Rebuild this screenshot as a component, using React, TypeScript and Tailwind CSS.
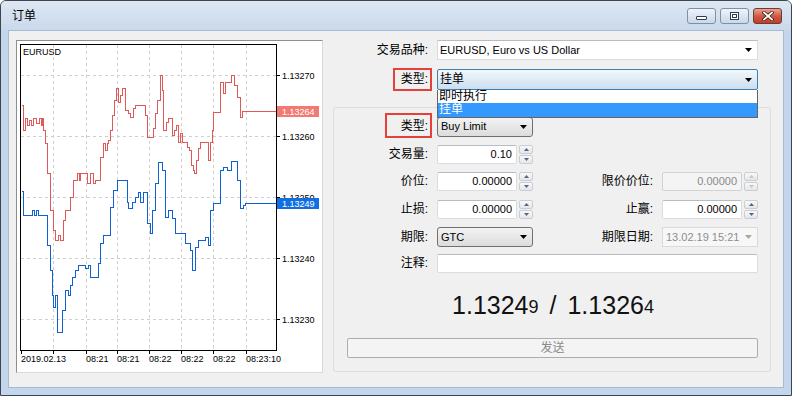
import React from 'react'

const FONT = "font-['Liberation_Sans','Noto_Sans_CJK_SC',sans-serif]"

// ask (red) and bid (blue) ticks, page coordinates
const ASK = [
  [21, 105], [23, 130], [25, 118], [27, 125], [29, 120], [31, 125], [33, 118], [36, 123], [39, 118], [41, 125],
  [42, 118], [43, 130], [45, 143], [47, 173], [50, 210], [53, 230], [55, 240], [58, 235], [60, 240], [62, 240],
  [63, 220], [65, 210], [70, 197], [73, 180], [77, 173], [79, 180], [80, 173], [84, 173], [87, 183], [90, 173],
  [93, 183], [95, 180], [97, 180], [100, 157], [103, 143], [105, 150], [107, 143], [108, 140], [110, 130],
  [112, 115], [114, 100], [116, 88], [118, 102], [120, 95], [122, 88], [125, 110], [128, 113], [130, 117],
  [133, 108], [135, 105], [143, 105], [145, 115], [147, 137], [151, 137], [153, 128], [155, 113], [157, 100],
  [160, 75], [162, 90], [163, 130], [166, 122], [168, 118], [170, 118], [172, 135], [174, 130], [176, 125],
  [178, 142], [180, 133], [182, 142], [185, 142], [187, 147], [189, 150], [191, 165], [193, 170], [194, 173],
  [196, 160], [198, 148], [200, 142], [207, 142], [208, 160], [210, 142], [212, 130], [213, 112], [217, 112],
  [220, 82], [223, 93], [225, 82], [228, 82], [231, 75], [234, 85], [237, 97], [240, 117], [242, 111], [276, 111],
]

const BID = [
  [21, 191], [23, 215], [30, 215], [32, 210], [34, 215], [36, 210], [38, 215], [45, 215], [47, 245], [50, 270],
  [52, 295], [53, 307], [55, 295], [57, 332], [60, 332], [62, 310], [65, 290], [68, 295], [70, 285], [72, 277],
  [75, 270], [78, 265], [82, 265], [85, 268], [88, 265], [90, 277], [95, 277], [98, 263], [100, 243], [103, 235],
  [108, 235], [110, 207], [113, 190], [117, 180], [124, 180], [127, 202], [128, 208], [132, 202], [135, 197],
  [138, 192], [140, 202], [143, 192], [147, 223], [150, 233], [152, 210], [155, 183], [158, 162], [162, 170],
  [165, 217], [168, 210], [172, 218], [175, 233], [180, 233], [185, 243], [190, 250], [192, 270], [195, 247],
  [198, 240], [205, 237], [208, 245], [210, 210], [213, 203], [217, 203], [220, 170], [223, 167], [227, 170],
  [231, 161], [237, 180], [240, 208], [243, 205], [245, 203], [276, 203],
]

const step = (pts: number[][]) =>
  pts.map(([x, y], i) => (i === 0 ? `M${x + 0.5} ${y + 0.5}` : `H${x + 0.5}V${y + 0.5}`)).join('')

const PRICES = [
  { y: 75, label: '1.13270' },
  { y: 136, label: '1.13260' },
  { y: 197, label: '1.13250' },
  { y: 258, label: '1.13240' },
  { y: 319, label: '1.13230' },
]
const TIMES = [
  { x: 53, label: '' },
  { x: 86, label: '08:21' },
  { x: 117, label: '08:21' },
  { x: 149, label: '08:22' },
  { x: 181, label: '08:22' },
  { x: 213, label: '08:22' },
  { x: 246, label: '08:23:10' },
]

function Chart() {
  return (
    <div className="h-[333px] w-[307px] border border-t-[#8f8f8f] border-l-[#8f8f8f] border-r-[#d9d9d9] border-b-[#d9d9d9] bg-white">
      <svg width="305" height="331" viewBox="17 41 305 331" className="block">
        {PRICES.map((p) => (
          <line key={p.y} x1="21" x2="276" y1={p.y + 0.5} y2={p.y + 0.5} stroke="#cfcfcf" strokeDasharray="3 3" />
        ))}
        {TIMES.map((t) => (
          <line key={t.x} x1={t.x + 0.5} x2={t.x + 0.5} y1="45" y2="350" stroke="#cfcfcf" strokeDasharray="3 3" />
        ))}
        <path d={step(ASK)} fill="none" stroke="#e05858" strokeWidth="1" shapeRendering="crispEdges" />
        <path d={step(BID)} fill="none" stroke="#0f60d4" strokeWidth="1" shapeRendering="crispEdges" />
        <rect x="20.5" y="44.5" width="256" height="306" fill="none" stroke="#000" />
        {PRICES.map((p) => (
          <g key={p.label}>
            <line x1="276" x2="280" y1={p.y + 0.5} y2={p.y + 0.5} stroke="#000" />
            <text x="282" y={p.y + 3.5} fontSize="9" fill="#000" fontFamily="Liberation Sans">
              {p.label}
            </text>
          </g>
        ))}
        <rect x="277" y="106" width="42" height="11" fill="#f27a72" />
        <text x="282" y="114.5" fontSize="9" fill="#fff" fontFamily="Liberation Sans">1.13264</text>
        <rect x="277" y="198" width="42" height="11" fill="#126fe2" />
        <text x="282" y="206.5" fontSize="9" fill="#fff" fontFamily="Liberation Sans">1.13249</text>
        <line x1="21.5" x2="21.5" y1="350" y2="354" stroke="#000" />
        <text x="21" y="362" fontSize="9" fill="#000" fontFamily="Liberation Sans">2019.02.13</text>
        {TIMES.map((t) => (
          <g key={'t' + t.x}>
            <line x1={t.x + 0.5} x2={t.x + 0.5} y1="350" y2="354" stroke="#000" />
            {t.label && (
              <text x={t.x} y="362" fontSize="9" fill="#000" fontFamily="Liberation Sans">
                {t.label}
              </text>
            )}
          </g>
        ))}
        <text x="23" y="55" fontSize="9" fill="#000" fontFamily="Liberation Sans">EURUSD</text>
      </svg>
    </div>
  )
}

function Arrow({ color = '#000' }: { color?: string }) {
  return (
    <svg width="7" height="4" viewBox="0 0 7 4" className="block">
      <path d="M0 0h7L3.5 4z" fill={color} />
    </svg>
  )
}

function Spin({ disabled }: { disabled?: boolean }) {
  const c = disabled ? '#c6c6c6' : '#51668c'
  return (
    <div className="ml-[2px] flex w-[14px] flex-col gap-px">
      <div className="flex h-[9px] items-center justify-center rounded-[2px] border border-[#c9ced6] bg-linear-to-b from-[#f9f9f9] to-[#e6e6e6]">
        <svg width="5" height="3" viewBox="0 0 5 3" className="block">
          <path d="M0 3h5L2.5 0z" fill={c} />
        </svg>
      </div>
      <div className="flex h-[9px] items-center justify-center rounded-[2px] border border-[#c9ced6] bg-linear-to-b from-[#f9f9f9] to-[#e6e6e6]">
        <svg width="5" height="3" viewBox="0 0 5 3" className="block">
          <path d="M0 0h5L2.5 3z" fill={c} />
        </svg>
      </div>
    </div>
  )
}

function NumField({ value, disabled }: { value: string; disabled?: boolean }) {
  return (
    <div className="flex h-[19px] w-[96px]">
      <div
        className={
          disabled
            ? 'flex h-full w-[80px] items-center justify-end rounded-[2px] border border-[#d3d3d3] bg-[#f4f4f4] pr-[4px] text-[11px] text-[#8a8a8a]'
            : 'flex h-full w-[80px] items-center justify-end rounded-[2px] border border-[#d9dde3] border-t-[#b7bcc4] bg-white pr-[4px] text-[11px] text-black'
        }
      >
        {value}
      </div>
      <Spin disabled={disabled} />
    </div>
  )
}

function DropList({ value }: { value: string }) {
  return (
    <div className="flex h-[20px] w-[96px] items-center justify-between rounded-[3px] border border-[#707070] bg-linear-to-b from-[#f3f3f3] to-[#dcdcdc] pl-[3px] pr-[5px] text-[11px] text-black">
      <span>{value}</span>
      <Arrow />
    </div>
  )
}

function Label({ w, children }: { w: string; children: React.ReactNode }) {
  return <div className={`${w} shrink-0 text-right text-[12px] leading-[19px] text-black`}>{children}</div>
}

function Mark({ className }: { className: string }) {
  return <span className={`pointer-events-none absolute border-2 border-[#e6403a] ${className}`} />
}

export default function App() {
  return (
    <div className={`${FONT} flex h-[396px] w-[792px] flex-col overflow-hidden rounded-t-[6px] border border-[#3d4650] bg-[#c3d6eb]`}>
      {/* title bar */}
      <div className="flex h-[29px] shrink-0 items-center bg-linear-to-b from-[#dde7f3] to-[#c9d9eb] pl-[11px] pr-[9px]">
        <span className="text-[12px] text-black">订单</span>
        <div className="ml-auto flex gap-[4px]">
          <div className="flex h-[16px] w-[29px] items-end justify-center rounded-[3px] border border-[#7d90a8] bg-linear-to-b from-[#eef3fa] to-[#cad8e8] pb-[3px]">
            <span className="h-[4px] w-[11px] rounded-[1px] border border-[#2e3d4f] bg-white" />
          </div>
          <div className="flex h-[16px] w-[29px] items-center justify-center rounded-[3px] border border-[#7d90a8] bg-linear-to-b from-[#eef3fa] to-[#cad8e8]">
            <span className="h-[8px] w-[9px] border border-[#2e3d4f] bg-white p-[1px]">
              <span className="block h-full w-full border border-[#2e3d4f]" />
            </span>
          </div>
          <div className="flex h-[16px] w-[29px] items-center justify-center rounded-[3px] border border-[#6e3b33] bg-linear-to-b from-[#e9a392] via-[#cf5a45] to-[#c13d28]">
            <svg width="12" height="10" viewBox="0 0 12 10" className="block">
              <path d="M2 1.5l8 7M10 1.5l-8 7" stroke="#3b1d19" strokeWidth="3.4" strokeLinecap="square" />
              <path d="M2 1.5l8 7M10 1.5l-8 7" stroke="#fff" strokeWidth="1.8" strokeLinecap="square" />
            </svg>
          </div>
        </div>
      </div>

      {/* client */}
      <div className="flex-1 px-[7px] pb-[7px]">
        <div className="flex h-full border border-[#a6bbd2] bg-[#f0f0f0] pl-[7px] pt-[9px]">
          <Chart />

          <div className="relative ml-[10px] w-[438px]">
            <div className="flex h-[20px] items-center">
              <Label w="w-[95px]">交易品种:</Label>
              <div className="ml-[9px] flex h-[20px] w-[321px] items-center justify-between border border-[#d9dde3] border-t-[#b7bcc4] bg-white pl-[2px] pr-[5px] text-[11px] text-black">
                <span>EURUSD, Euro vs US Dollar</span>
                <Arrow />
              </div>
            </div>

            <div className="relative mt-[9px] flex h-[21px] items-center">
              <div className="relative">
                <Label w="w-[95px]">类型:</Label>
                <Mark className="left-[60px] top-[-2px] h-[23px] w-[39px]" />
              </div>
              <div className="ml-[9px] flex h-[21px] w-[321px] items-center justify-between rounded-[2px] border border-[#3c7fb1] bg-linear-to-b from-[#f3f8fc] to-[#cbdeee] pl-[2px] pr-[5px] text-[12px] text-black">
                <span className="leading-[19px]">挂单</span>
                <Arrow />
              </div>
              {/* open list */}
              <div className="absolute left-[104px] top-[21px] z-10 w-[321px] border border-t-0 border-[#646464] bg-white text-[12px] leading-[13px]">
                <div className="h-[13px] pl-[1px] text-black">即时执行</div>
                <div className="h-[14px] bg-[#3399ff] pl-[1px] text-white">挂单</div>
              </div>
            </div>

            {/* group box */}
            <div className="mt-[17px] h-[265px] rounded-[3px] border border-[#d5dfe5] pt-[9px]">
              <div className="flex h-[19px] items-center">
                <div className="relative">
                  <Label w="w-[94px]">类型:</Label>
                  <Mark className="left-[51px] top-[-4px] h-[25px] w-[47px]" />
                </div>
                <div className="ml-[9px]">
                  <DropList value="Buy Limit" />
                </div>
              </div>

              <div className="mt-[9px] flex h-[19px] items-center">
                <Label w="w-[94px]">交易量:</Label>
                <div className="ml-[9px]">
                  <NumField value="0.10" />
                </div>
              </div>

              <div className="mt-[8px] flex h-[19px] items-center">
                <Label w="w-[94px]">价位:</Label>
                <div className="ml-[9px]">
                  <NumField value="0.00000" />
                </div>
                <Label w="w-[120px]">限价价位:</Label>
                <div className="ml-[9px]">
                  <NumField value="0.00000" disabled />
                </div>
              </div>

              <div className="mt-[9px] flex h-[19px] items-center">
                <Label w="w-[94px]">止损:</Label>
                <div className="ml-[9px]">
                  <NumField value="0.00000" />
                </div>
                <Label w="w-[120px]">止赢:</Label>
                <div className="ml-[9px]">
                  <NumField value="0.00000" />
                </div>
              </div>

              <div className="mt-[8px] flex h-[20px] items-center">
                <Label w="w-[94px]">期限:</Label>
                <div className="ml-[9px]">
                  <DropList value="GTC" />
                </div>
                <Label w="w-[120px]">期限日期:</Label>
                <div className="ml-[9px] flex h-[20px] w-[96px] items-center justify-between border border-[#dadada] bg-[#f7f7f7] pl-[3px] pr-[5px] text-[11px] text-[#8d8d8d]">
                  <span>13.02.19 15:21</span>
                  <Arrow color="#a8a8a8" />
                </div>
              </div>

              <div className="mt-[7px] flex h-[19px] items-center">
                <Label w="w-[94px]">注释:</Label>
                <div className="ml-[9px] h-[19px] w-[321px] rounded-[2px] border border-[#d9dde3] border-t-[#b7bcc4] bg-white" />
              </div>

              <div className="mt-[17px] flex h-[30px] items-center justify-center pl-[2px] text-[25px] leading-[30px] text-[#111]">
                <span>1.1324</span>
                <span className="mt-[4px] text-[18px]">9</span>
                <span className="mx-[11px]">/</span>
                <span>1.1326</span>
                <span className="mt-[4px] text-[18px]">4</span>
              </div>

              <div className="ml-[13px] mt-[18px] flex h-[20px] w-[411px] items-center justify-center rounded-[2px] border border-[#adadad] bg-[#f4f4f4] text-[12px] text-[#8a8a8a]">
                发送
              </div>
            </div>
          </div>
        </div>
      </div>
    </div>
  )
}
